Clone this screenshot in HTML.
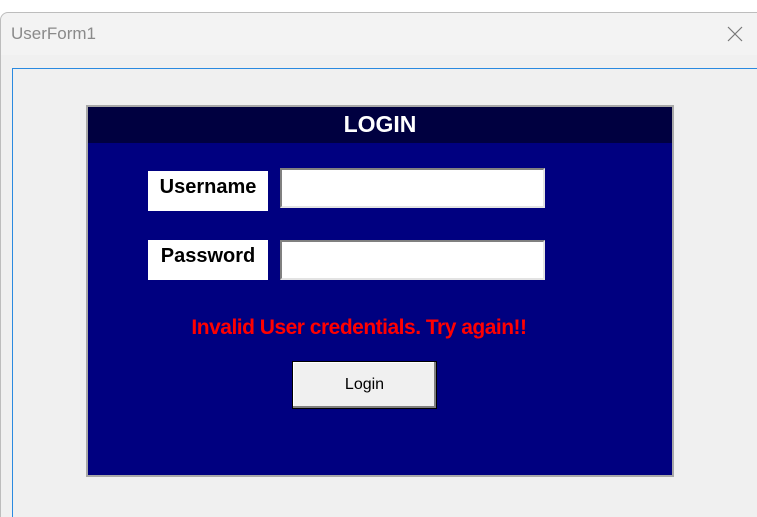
<!DOCTYPE html>
<html><head><style>
*{margin:0;padding:0;box-sizing:border-box}
html,body{width:757px;height:517px;overflow:hidden}
body{background:#fff;position:relative;font-family:"Liberation Sans",sans-serif}
.win{position:absolute;left:0;top:12px;width:770px;height:520px;background:#f0f0f0;border:1px solid #bdbdbd;border-radius:8px 8px 0 0}
.tb{position:absolute;left:0;top:0;right:0;height:42px;background:#f3f3f3;border-radius:8px 8px 0 0}
.title{position:absolute;left:10px;top:11px;font-size:17px;color:#8a8a8a}
.frame{position:absolute;left:12px;top:68px;width:760px;height:460px;border:1px solid #2a8ae0;background:#f0f0f0}
.panel{position:absolute;left:86px;top:105px;width:588px;height:372px;border:2px solid #a8a8a8;background:#000080}
.hdr{position:absolute;left:0;top:0;right:0;height:36px;background:#000040;color:#fff;font-weight:bold;font-size:23px;text-align:center;line-height:34px}
.lbl{position:absolute;background:#fff;font-weight:bold;font-size:20px;text-align:center;color:#000}
.inp{position:absolute;background:#fff;border-top:2px solid #808080;border-left:2px solid #808080;border-right:2px solid #e3e3e3;border-bottom:2px solid #e3e3e3}
.err{position:absolute;left:0;right:0;top:209px;text-align:center;color:#ff0000;font-weight:bold;font-size:21px;letter-spacing:-0.5px;padding-right:42px}
.btn{position:absolute;left:204px;top:254px;width:145px;height:48px;background:#f0f0f0;border:1px solid #000;box-shadow:inset -2px -2px 0 #808080,inset 1px 1px 0 #fff;font-size:16px;text-align:center;line-height:46px;color:#000}
</style></head><body>
<div class="win"><div class="tb"><div class="title">UserForm1</div>
<svg style="position:absolute;left:726px;top:13px" width="16" height="16"><path d="M1 1L15 15M15 1L1 15" stroke="#777" stroke-width="1.2"/></svg></div></div>
<div class="frame"></div>
<div class="panel">
<div class="hdr">LOGIN</div>
<div class="lbl" style="left:60px;top:64px;width:120px;height:40px;line-height:32px">Username</div>
<div class="inp" style="left:192px;top:61px;width:265px;height:40px"></div>
<div class="lbl" style="left:60px;top:133px;width:120px;height:40px;line-height:32px">Password</div>
<div class="inp" style="left:192px;top:133px;width:265px;height:40px"></div>
<div class="err">Invalid User credentials. Try again!!</div>
<div class="btn">Login</div>
</div>
</body></html>
